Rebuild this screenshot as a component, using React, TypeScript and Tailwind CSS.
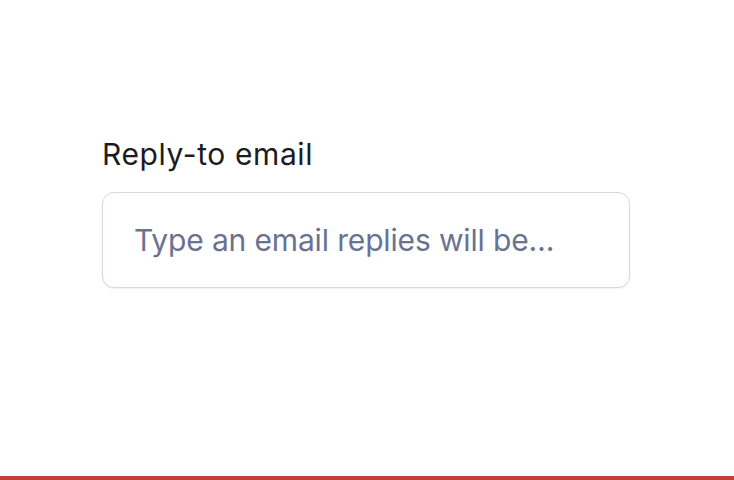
export default function App() {
  return (
    <div className="flex h-[480px] w-full flex-col bg-white" style={{ fontFamily: "Inter, 'Noto Sans', sans-serif" }}>
      <div className="flex flex-1 flex-col pl-[102px] pt-[134px]">
        <label htmlFor="reply-to" className="text-[30px] leading-[40px] tracking-[0.02em] text-[#1c1c1f]">
          Reply-to email
        </label>
        <input
          id="reply-to"
          type="email"
          placeholder="Type an email replies will be…"
          className="mt-[18px] h-[96px] w-[528px] rounded-[12px] border border-[#d7d8df] bg-white px-[31px] text-[30px] tracking-[-0.005em] text-[#1c1c1f] shadow-[0_1px_2px_rgba(16,24,40,0.06)] outline-none placeholder:text-[#6b7190]"
        />
      </div>
      <div className="h-[4px] w-full bg-[#c93c3c]" />
    </div>
  );
}
